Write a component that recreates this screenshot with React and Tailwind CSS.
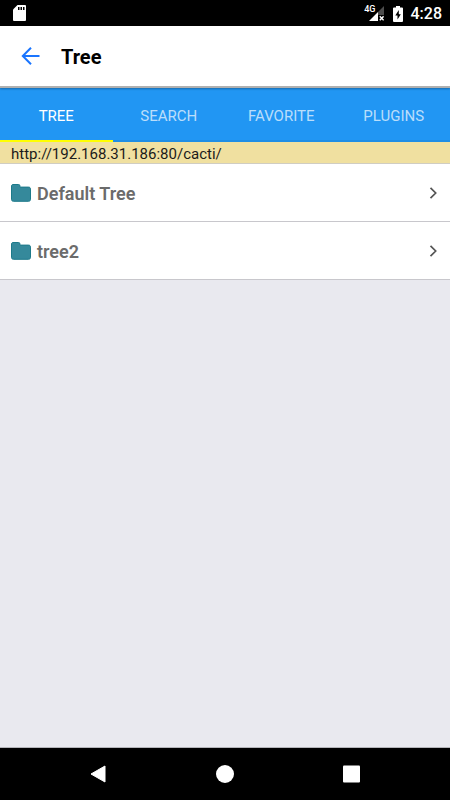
import { useState } from 'react';

const tabs = ['TREE', 'SEARCH', 'FAVORITE', 'PLUGINS'];

const trees = [
    { id: 1, name: 'Default Tree' },
    { id: 2, name: 'tree2' },
];

const FolderIcon = () => (
    <svg viewBox="0 0 20 18" className="h-[18px] w-5" aria-hidden="true">
        <path
            d="M2 .5h5.600c.9 0 1.300.6 1.300 1.300v.5c0 .5.3.8.8.8H17.500c1.300 0 2 .7 2 2v10.200c0 1.300-.7 2-2 2h-15c-1.300 0-2-.7-2-2V2C.5 1.100 1.100.5 2 .5z"
            fill="#35899b"
            stroke="#1d7a8a"
            strokeWidth="1"
        />
    </svg>
);

const StatusBar = () => (
    <div className="flex h-[26px] shrink-0 items-center justify-between bg-black pl-[13px] pr-2 text-white">
        <svg viewBox="0 0 13 16" className="h-4 w-[13px]" aria-label="SD card">
            <path d="M4.500 0H12a1 1 0 0 1 1 1v14a1 1 0 0 1-1 1H1a1 1 0 0 1-1-1V4.500z" fill="#fff" />
            <path d="M5 2h1.500v3H5zM7.500 2H9v3H7.500zM10 2h1.500v3H10z" fill="#000" />
        </svg>
        <div className="flex items-center pt-px">
            <div className="flex items-start">
                <span className="-mr-[7px] text-[9px] font-medium leading-[7px]">4G</span>
                <svg viewBox="0 0 15 15" className="h-[15px] w-[15px]" aria-label="Signal">
                    <path d="M15 0v9H9V6z" fill="#4d4d4d" />
                    <path d="M9 6v9H0z" fill="#fff" />
                    <path d="M10.800 10.300l3.800 4M14.600 10.300l-3.800 4" stroke="#fff" strokeWidth="1.400" />
                </svg>
            </div>
            <svg viewBox="0 0 10 16" className="ml-[9px] h-4 w-[10px]" aria-label="Battery charging">
                <path d="M3 0h4v1.500h2a1 1 0 0 1 1 1V15a1 1 0 0 1-1 1H1a1 1 0 0 1-1-1V2.500a1 1 0 0 1 1-1h2z" fill="#fff" />
                <path d="M5.800 4L2.300 9.500h2.200V13.500L7.800 8.200H5.800z" fill="#000" />
            </svg>
            <span className="ml-2 pt-px text-base font-medium leading-5">4:28</span>
        </div>
    </div>
);

const NavBar = () => (
    <div className="flex h-[52px] shrink-0 items-center justify-center gap-[107px] bg-black">
        <button type="button" aria-label="Back">
            <svg viewBox="0 0 20 20" className="size-5">
                <path d="M3 10L17 2v16z" fill="#fff" stroke="#fff" strokeWidth="1" strokeLinejoin="round" />
            </svg>
        </button>
        <button type="button" aria-label="Home">
            <svg viewBox="0 0 20 20" className="size-5">
                <circle cx="10" cy="10" r="9" fill="#fff" />
            </svg>
        </button>
        <button type="button" aria-label="Overview">
            <svg viewBox="0 0 20 20" className="size-5">
                <rect x="1" y="1.500" width="17" height="17" rx="1" fill="#fff" />
            </svg>
        </button>
    </div>
);

const App = () => {
    const [active, setActive] = useState('TREE');

    return (
        <div className="flex min-h-screen flex-col bg-[#e9e9ef] font-['Roboto',sans-serif]">
            <StatusBar />

            <header className="z-10 flex h-[62px] shrink-0 items-center border-b-2 border-[#b0b0b0] bg-white pl-[21px] shadow-[0_1px_2px_rgba(0,0,0,0.3)]">
                <button type="button" aria-label="Go back">
                    <svg viewBox="0 0 20 20" className="size-5" fill="none" stroke="#1a75ff" strokeWidth="2">
                        <path d="M18.500 10H2M10 1.800L1.800 10l8.200 8.200" />
                    </svg>
                </button>
                <h1 className="ml-5 pt-0.5 text-xl font-bold text-black">Tree</h1>
            </header>

            <nav className="grid h-[54px] shrink-0 grid-cols-4 bg-[#2196f3]" role="tablist">
                {tabs.map((tab) => (
                    <button
                        key={tab}
                        type="button"
                        role="tab"
                        aria-selected={active === tab}
                        onClick={() => setActive(tab)}
                        className={`border-b-2 pt-1 text-[15px] ${
                            active === tab ? 'border-[#ffff00] text-white' : 'border-[#1f8ee6] text-white/70'
                        }`}
                    >
                        {tab}
                    </button>
                ))}
            </nav>

            <p className="h-[22px] shrink-0 border-b border-[#d0cdc2] bg-[#f0e0a0] px-[11px] text-[15px] leading-6 text-[#1b1b1b]">
                http://192.168.31.186:80/cacti/
            </p>

            <main className="grow border-b border-[#b4b4b9]">
                <ul>
                    {trees.map((tree) => (
                        <li key={tree.id} className="border-b border-[#c8c7cc] bg-white">
                            <button type="button" className="flex h-[57px] w-full items-center pl-[11px] pr-3 text-left">
                                <FolderIcon />
                                <span className="ml-[6px] grow pt-0.5 text-lg font-semibold text-[#6b6b6b]">{tree.name}</span>
                                <svg viewBox="0 0 10 12" className="h-3 w-[10px]" fill="none" stroke="#555" strokeWidth="1.700" aria-hidden="true">
                                    <path d="M2.500 .8L7.700 6l-5.200 5.200" />
                                </svg>
                            </button>
                        </li>
                    ))}
                </ul>
            </main>

            <NavBar />
        </div>
    );
};

export default App;
